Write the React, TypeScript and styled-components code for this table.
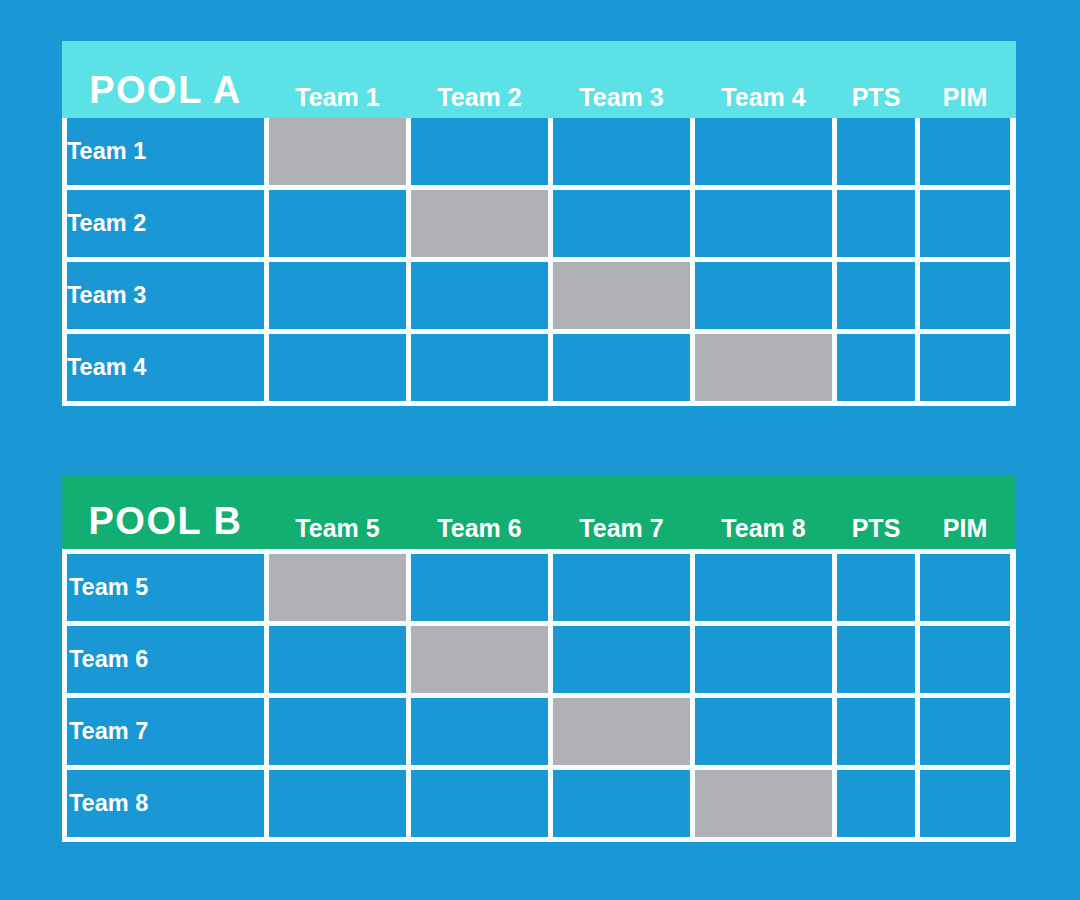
import styled, { createGlobalStyle } from 'styled-components';

const GlobalStyle = createGlobalStyle`
  html, body {
    margin: 0;
    padding: 0;
    background: #1a98d6;
  }
  body {
    font-family: "Liberation Sans", Arial, sans-serif;
  }
`;

const COLUMNS = '197px repeat(4, 137px) 78px 90px';

interface IPool {
  title: string;
  teams: string[];
  color: string;
  headerHeight: number;
  topBorder?: boolean;
  labelIndent?: number;
}

function Pool({ title, teams, color, headerHeight, topBorder, labelIndent = 0 }: IPool) {
  return (
    <PoolBox>
      <Header $color={color} $height={headerHeight}>
        <PoolTitle>{title}</PoolTitle>
        {teams.map((t) => (
          <HeadLabel key={t}>{t}</HeadLabel>
        ))}
        <HeadLabel>PTS</HeadLabel>
        <HeadLabel>PIM</HeadLabel>
      </Header>
      <Grid $topBorder={topBorder}>
        {teams.map((rowTeam, r) => (
          <Row key={rowTeam}>
            <RowLabel $indent={labelIndent}>{rowTeam}</RowLabel>
            {teams.map((_, c) => (
              <Cell key={c} $blocked={r === c} />
            ))}
            <Cell />
            <Cell />
          </Row>
        ))}
      </Grid>
    </PoolBox>
  );
}

export default function App() {
  return (
    <>
      <GlobalStyle />
      <Page>
        <Pool
          title="POOL A"
          teams={['Team 1', 'Team 2', 'Team 3', 'Team 4']}
          color="#5ce1e6"
          headerHeight={77}
        />
        <Pool
          title="POOL B"
          teams={['Team 5', 'Team 6', 'Team 7', 'Team 8']}
          color="#12ae72"
          headerHeight={74}
          topBorder
          labelIndent={2}
        />
      </Page>
    </>
  );
}

const Page = styled.div`
  width: 1080px;
  height: 900px;
  box-sizing: border-box;
  padding: 41px 0 0 62px;
  display: flex;
  flex-direction: column;
  gap: 69px;
  background: #1a98d6;
`;

const PoolBox = styled.section`
  width: 954px;
  display: flex;
  flex-direction: column;
`;

const Header = styled.div<{ $color: string; $height: number }>`
  height: ${(p) => p.$height}px;
  box-sizing: border-box;
  padding: 0 5px;
  background: ${(p) => p.$color};
  display: grid;
  grid-template-columns: ${COLUMNS};
  column-gap: 5px;
  align-items: end;
  color: #fff;
`;

const PoolTitle = styled.div`
  font-size: 38px;
  font-weight: 700;
  letter-spacing: 1.5px;
  line-height: 1;
  text-align: center;
  padding-bottom: 9px;
`;

const HeadLabel = styled.div`
  font-size: 25px;
  font-weight: 700;
  line-height: 1;
  text-align: center;
  padding-bottom: 8px;
  white-space: nowrap;
`;

const Grid = styled.div<{ $topBorder?: boolean }>`
  background: #f7fcff;
  padding: ${(p) => (p.$topBorder ? '5px' : '0')} 5px 5px;
  display: flex;
  flex-direction: column;
  gap: 5px;
`;

const Row = styled.div`
  height: 67px;
  display: grid;
  grid-template-columns: ${COLUMNS};
  column-gap: 5px;
`;

const Cell = styled.div<{ $blocked?: boolean }>`
  background: ${(p) => (p.$blocked ? '#b0b1b4' : '#1a98d6')};
`;

const RowLabel = styled.div<{ $indent: number }>`
  background: #1a98d6;
  color: #fff;
  font-size: 23.5px;
  font-weight: 700;
  display: flex;
  align-items: center;
  padding-left: ${(p) => p.$indent}px;
`;
